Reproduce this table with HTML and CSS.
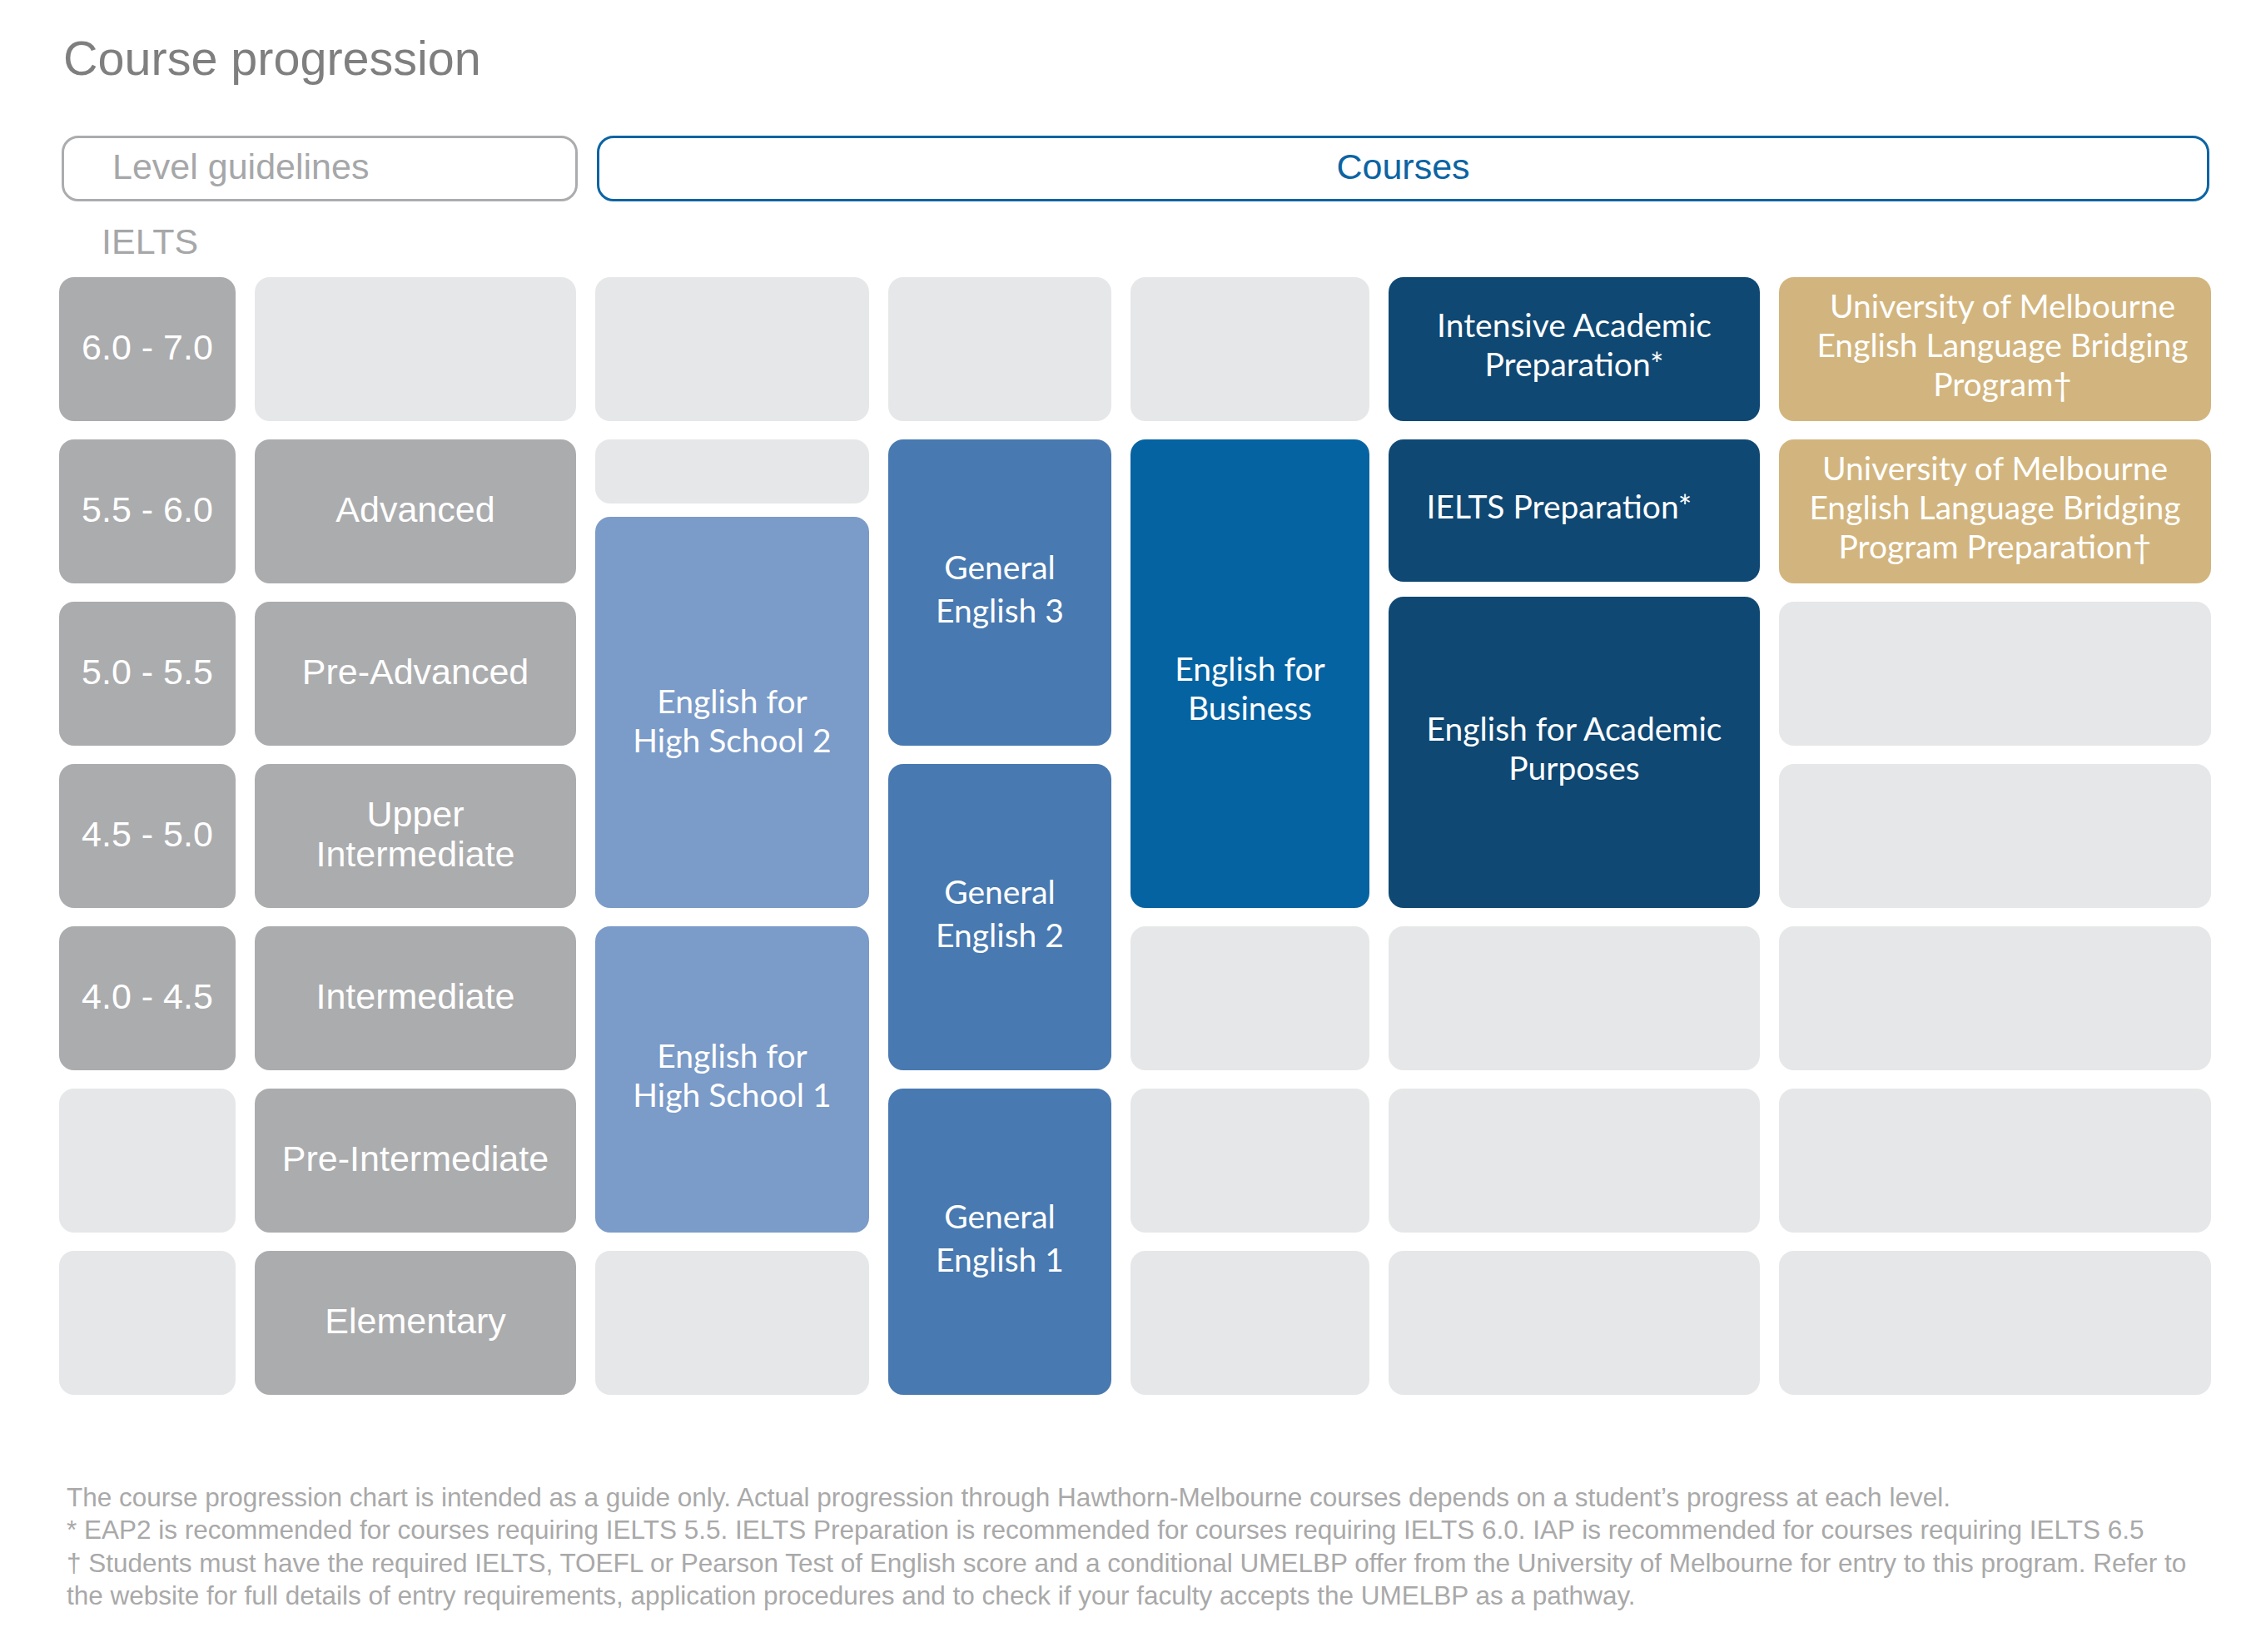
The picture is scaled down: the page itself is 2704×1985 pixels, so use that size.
FILE: index.html
```html
<!DOCTYPE html>
<html lang="en">
<head>
<meta charset="utf-8">
<title>Course progression</title>
<link rel="stylesheet" href="styles.css">
</head>
<body>
<div class="page">
  <h1 class="title">Course progression</h1>

  <div class="headers">
    <div class="hdr hdr-levels">Level guidelines</div>
    <div class="hdr hdr-courses">Courses</div>
  </div>

  <div class="ielts">IELTS</div>

  <div class="chart">
    <!-- Column A: IELTS bands -->
    <div class="cell lvl col-a row-1">6.0 - 7.0</div>
    <div class="cell lvl col-a row-2">5.5 - 6.0</div>
    <div class="cell lvl col-a row-3">5.0 - 5.5</div>
    <div class="cell lvl col-a row-4">4.5 - 5.0</div>
    <div class="cell lvl col-a row-5">4.0 - 4.5</div>
    <div class="cell empty col-a row-6"></div>
    <div class="cell empty col-a row-7"></div>

    <!-- Column B: level names -->
    <div class="cell empty col-b row-1"></div>
    <div class="cell lvl col-b row-2">Advanced</div>
    <div class="cell lvl col-b row-3">Pre-Advanced</div>
    <div class="cell lvl col-b row-4">Upper<br>Intermediate</div>
    <div class="cell lvl col-b row-5">Intermediate</div>
    <div class="cell lvl col-b row-6">Pre-Intermediate</div>
    <div class="cell lvl col-b row-7">Elementary</div>

    <!-- Column C: English for High School -->
    <div class="cell empty col-c row-1"></div>
    <div class="stack stack-c col-c rows-2-4">
      <div class="cell empty stub"></div>
      <div class="cell course ehs grow ehs2">English for<br>High School 2</div>
    </div>
    <div class="cell course ehs col-c rows-5-6">English for<br>High School 1</div>
    <div class="cell empty col-c row-7"></div>

    <!-- Column D: General English -->
    <div class="cell empty col-d row-1"></div>
    <div class="cell course ge col-d rows-2-3">General<br>English 3</div>
    <div class="cell course ge col-d rows-4-5">General<br>English 2</div>
    <div class="cell course ge col-d rows-6-7">General<br>English 1</div>

    <!-- Column E: English for Business -->
    <div class="cell empty col-e row-1"></div>
    <div class="cell course efb col-e rows-2-4">English for<br>Business</div>
    <div class="cell empty col-e row-5"></div>
    <div class="cell empty col-e row-6"></div>
    <div class="cell empty col-e row-7"></div>

    <!-- Column F: academic courses -->
    <div class="cell course navy col-f row-1">Intensive Academic<br>Preparation*</div>
    <div class="stack stack-f col-f rows-2-4">
      <div class="cell course navy ielts-prep">IELTS Preparation*</div>
      <div class="cell course navy grow">English for Academic<br>Purposes</div>
    </div>
    <div class="cell empty col-f row-5"></div>
    <div class="cell empty col-f row-6"></div>
    <div class="cell empty col-f row-7"></div>

    <!-- Column G: University of Melbourne -->
    <div class="cell course gold gold-1 col-g row-1">University of Melbourne<br>English Language Bridging<br>Program†</div>
    <div class="cell course gold col-g row-2">University of Melbourne<br>English Language Bridging<br>Program Preparation†</div>
    <div class="cell empty col-g row-3"></div>
    <div class="cell empty col-g row-4"></div>
    <div class="cell empty col-g row-5"></div>
    <div class="cell empty col-g row-6"></div>
    <div class="cell empty col-g row-7"></div>
  </div>

  <div class="notes">
    <p class="note">The course progression chart is intended as a guide only. Actual progression through Hawthorn-Melbourne courses depends on a student’s progress at each level.</p>
    <p class="note">* EAP2 is recommended for courses requiring IELTS 5.5. IELTS Preparation is recommended for courses requiring IELTS 6.0. IAP is recommended for courses requiring IELTS 6.5</p>
    <p class="note">† Students must have the required IELTS, TOEFL or Pearson Test of English score and a conditional UMELBP offer from the University of Melbourne for entry to this program. Refer to<br>the website for full details of entry requirements, application procedures and to check if your faculty accepts the UMELBP as a pathway.</p>
  </div>
</div>
</body>
</html>
```

FILE: styles.css
```css
* {
  box-sizing: border-box;
}

html, body {
  margin: 0;
  padding: 0;
  background: #ffffff;
}

body {
  font-family: "Liberation Sans", Arial, sans-serif;
}

.page {
  width: 2704px;
  padding: 42px 0 0 71px;
}

.title {
  margin: 0 0 0 5px;
  font-size: 57.5px;
  line-height: 57px;
  font-weight: normal;
  color: #7f7f7f;
  height: 57px;
}

.headers,
.chart {
  display: grid;
  grid-template-columns: 212px 386px 329px 268px 287px 446px 519px;
  column-gap: 23px;
}

.headers {
  margin-top: 64px;
  height: 79px;
}

.hdr {
  height: 79px;
  border: 3px solid;
  border-radius: 20px;
  display: flex;
  align-items: center;
  font-size: 43px;
  line-height: 43px;
  padding-bottom: 4px;
}

.hdr-levels {
  grid-column: 1 / 3;
  margin-left: 3px;
  margin-right: -2px;
  border-color: #abacae;
  color: #a6a7a9;
  padding-left: 58px;
}

.hdr-courses {
  grid-column: 3 / 8;
  margin-left: 2px;
  margin-right: 2px;
  border-color: #0b64a3;
  color: #0b64a3;
  justify-content: center;
}

.ielts {
  height: 91px;
  padding: 27px 0 0 51px;
  font-size: 43px;
  line-height: 43px;
  color: #a6a7a9;
}

.chart {
  grid-template-rows: repeat(7, 173px);
  row-gap: 22px;
}

.cell {
  border-radius: 18px;
  display: flex;
  align-items: center;
  justify-content: center;
  text-align: center;
  color: #ffffff;
}

.lvl {
  background: #abacae;
  font-size: 43px;
  line-height: 48px;
  padding-bottom: 6px;
}

.empty {
  background: #e6e7e8;
}

.course {
  font-family: Lato, "Open Sans", sans-serif;
  font-size: 39px;
  line-height: 47px;
  padding-bottom: 11px;
}

.ehs { background: #7b9bc8; }
.ge { background: #4879b0; line-height: 52px; }
.efb { background: #0663a1; }
.navy { background: #0f4873; }
.gold { background: #d2b57e; }

.ehs2 { padding-top: 30px; }
.efb { padding-top: 46px; }
.ielts-prep { padding-right: 36px; height: 171px; flex: none; }
.gold-1 { padding-left: 18px; }

.stack {
  display: flex;
  flex-direction: column;
}

.stack-c { gap: 16px; }
.stack-f { gap: 18px; }

.stub { height: 77px; flex: none; }
.grow { flex: 1; }

.col-a { grid-column: 1; }
.col-b { grid-column: 2; }
.col-c { grid-column: 3; }
.col-d { grid-column: 4; }
.col-e { grid-column: 5; }
.col-f { grid-column: 6; }
.col-g { grid-column: 7; }

.row-1 { grid-row: 1; }
.row-2 { grid-row: 2; }
.row-3 { grid-row: 3; }
.row-4 { grid-row: 4; }
.row-5 { grid-row: 5; }
.row-6 { grid-row: 6; }
.row-7 { grid-row: 7; }
.rows-2-3 { grid-row: 2 / 4; }
.rows-2-4 { grid-row: 2 / 5; }
.rows-4-5 { grid-row: 4 / 6; }
.rows-5-6 { grid-row: 5 / 7; }
.rows-6-7 { grid-row: 6 / 8; }

.notes {
  margin: 104px 0 0 9px;
  font-size: 31.5px;
  line-height: 39.3px;
  color: #a9a9a9;
}

.note {
  margin: 0;
  white-space: nowrap;
}
```
